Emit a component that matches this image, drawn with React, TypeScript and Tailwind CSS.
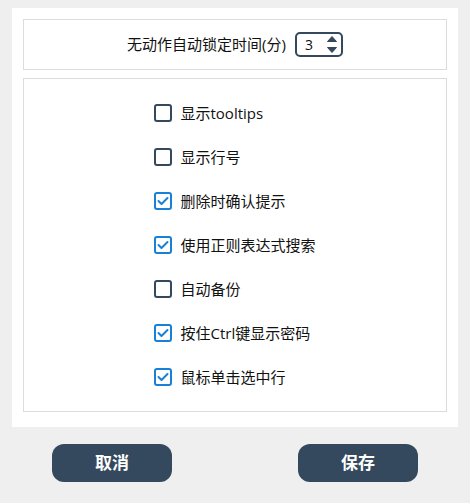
import React from "react";

const items: { label: string; checked: boolean }[] = [
  { label: "显示tooltips", checked: false },
  { label: "显示行号", checked: false },
  { label: "删除时确认提示", checked: true },
  { label: "使用正则表达式搜索", checked: true },
  { label: "自动备份", checked: false },
  { label: "按住Ctrl键显示密码", checked: true },
  { label: "鼠标单击选中行", checked: true },
];

function Box({ checked }: { checked: boolean }) {
  if (checked) {
    return (
      <span className="w-[18px] h-[18px] rounded-[3px] border-2 border-[#1a7fd6] bg-white flex items-center justify-center shrink-0">
        <svg width="12" height="10" viewBox="0 0 12 10">
          <polyline points="1.5,5 4.5,8 10.5,2" fill="none" stroke="#1a7fd6" strokeWidth="2" strokeLinecap="round" strokeLinejoin="round" />
        </svg>
      </span>
    );
  }
  return <span className="w-[18px] h-[18px] rounded-[3px] border-2 border-[#34495e] bg-white shrink-0" />;
}

export default function App() {
  return (
    <div
      className="w-[470px] h-[503px] bg-[#efefef] pt-2 px-3 text-[#111111]"
      style={{ fontFamily: '"Open Sans", "Noto Sans CJK SC", sans-serif' }}
    >
      <div className="bg-white pt-[11px] px-[11px] pb-[15px] flex flex-col gap-2">
        <div className="h-[51px] border border-[#dcdcdc] flex items-center justify-center gap-[9px]">
          <span className="text-[15px] leading-none">无动作自动锁定时间(分)</span>
          <div className="w-[48px] h-[25px] border-2 border-[#34495e] rounded-[5px] flex items-center justify-between pl-[8px] pr-[3px]">
            <span className="text-[14px] leading-none">3</span>
            <svg width="12" height="19" viewBox="0 0 12 19">
              <path d="M6 1.5 L10.5 6.5 H1.5 Z" fill="#34495e" stroke="#34495e" strokeWidth="1" strokeLinejoin="round" />
              <path d="M6 17.5 L10.5 12.5 H1.5 Z" fill="#34495e" stroke="#34495e" strokeWidth="1" strokeLinejoin="round" />
            </svg>
          </div>
        </div>
        <div className="h-[334px] border border-[#dcdcdc] flex justify-center items-center">
          <div className="flex flex-col">
            {items.map((it) => (
              <div key={it.label} className="h-[44px] flex items-center gap-2">
                <Box checked={it.checked} />
                <span className="text-[15px] leading-none">{it.label}</span>
              </div>
            ))}
          </div>
        </div>
      </div>
      <div className="mt-[17px] flex justify-center gap-[126px]">
        <button className="w-[120px] h-[38px] rounded-[12px] bg-[#34495e] text-white text-[17px] font-bold">取消</button>
        <button className="w-[120px] h-[38px] rounded-[12px] bg-[#34495e] text-white text-[17px] font-bold">保存</button>
      </div>
    </div>
  );
}
